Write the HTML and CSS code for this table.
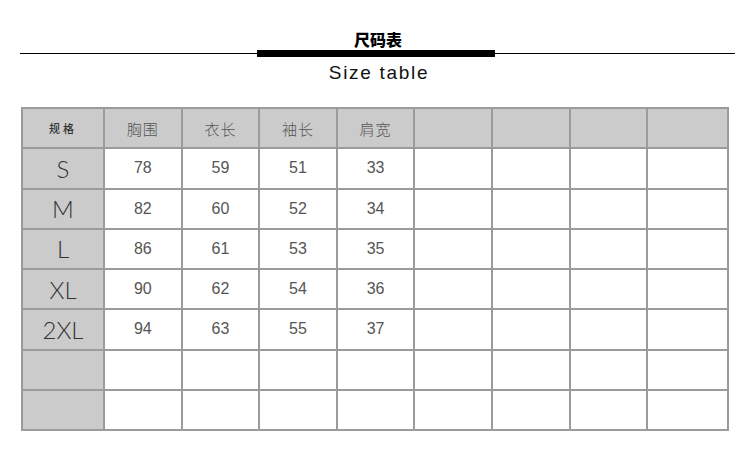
FILE: index.html
```html
<!DOCTYPE html>
<html>
<head>
<meta charset="utf-8">
<link rel="stylesheet" href="styles.css">
</head>
<body>
<div class="page">
  <div class="title">尺码表</div>
  <div class="rule"><div class="line"></div><div class="bar"></div><div class="line"></div></div>
  <div class="subtitle">Size table</div>
  <table class="sizes">
    <colgroup>
      <col class="c-first"><col class="c"><col class="c"><col class="c"><col class="c"><col class="c"><col class="c"><col class="c"><col class="c-last">
    </colgroup>
    <tr class="head">
      <th class="spec">规格</th><th>胸围</th><th>衣长</th><th>袖长</th><th>肩宽</th><th></th><th></th><th></th><th></th>
    </tr>
    <tr><th class="size">S</th><td>78</td><td>59</td><td>51</td><td>33</td><td></td><td></td><td></td><td></td></tr>
    <tr><th class="size">M</th><td>82</td><td>60</td><td>52</td><td>34</td><td></td><td></td><td></td><td></td></tr>
    <tr><th class="size">L</th><td>86</td><td>61</td><td>53</td><td>35</td><td></td><td></td><td></td><td></td></tr>
    <tr><th class="size">XL</th><td>90</td><td>62</td><td>54</td><td>36</td><td></td><td></td><td></td><td></td></tr>
    <tr><th class="size">2XL</th><td>94</td><td>63</td><td>55</td><td>37</td><td></td><td></td><td></td><td></td></tr>
    <tr><th class="size"></th><td></td><td></td><td></td><td></td><td></td><td></td><td></td><td></td></tr>
    <tr><th class="size"></th><td></td><td></td><td></td><td></td><td></td><td></td><td></td><td></td></tr>
  </table>
</div>
</body>
</html>
```
FILE: styles.css
```css
html, body {
  margin: 0;
  padding: 0;
  background: #fff;
}
.page {
  width: 750px;
  height: 450px;
  overflow: hidden;
  padding-top: 29px;
  box-sizing: border-box;
  font-family: "Liberation Sans", "Noto Sans CJK SC", sans-serif;
}
.title {
  text-align: center;
  padding-left: 6px;
  font-family: "Noto Sans CJK SC", sans-serif;
  font-weight: 900;
  font-size: 16px;
  line-height: 20px;
  color: #000;
  height: 20px;
}
.rule {
  display: grid;
  grid-template-columns: 237px 238px 240px;
  align-items: center;
  margin-left: 20px;
  margin-top: 1px;
  height: 7px;
}
.line {
  height: 1px;
  background: #000;
}
.bar {
  height: 7px;
  background: #000;
}
.subtitle {
  margin-top: 5px;
  text-align: center;
  padding-left: 8px;
  font-size: 19px;
  line-height: 22px;
  letter-spacing: 1.7px;
  color: #111;
}
.sizes {
  margin-top: 23px;
  margin-left: 21px;
  border-collapse: collapse;
  table-layout: fixed;
  width: 707px;
}
.c-first { width: 82px; }
.c { width: 77.6px; }
.c-last { width: 81px; }
.sizes th, .sizes td {
  border: 2px solid #9b9b9b;
  height: 38.25px;
  padding: 0;
  text-align: center;
  vertical-align: middle;
  font-weight: normal;
}
.sizes td {
  background: #fff;
  font-size: 16px;
  color: #555;
}
.head th {
  background: #cbcbcb;
  font-family: "Noto Sans CJK SC", sans-serif;
  font-weight: 300;
  font-size: 15px;
  letter-spacing: 1px;
  color: #555;
}
.head th.spec {
  font-size: 11px;
  font-weight: 500;
  color: #333;
  letter-spacing: 3px;
}
.sizes th.size {
  background: #cbcbcb;
  font-family: "Lato", "Liberation Sans", sans-serif;
  font-weight: 300;
  font-size: 24px;
  color: #333;
}
```
